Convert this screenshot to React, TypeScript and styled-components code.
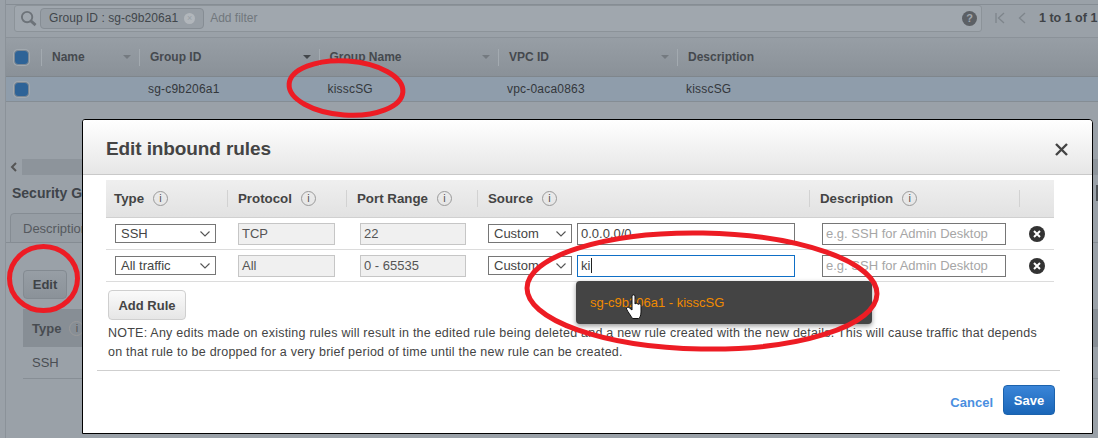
import styled, { createGlobalStyle } from "styled-components";

/* ── Global ─────────────────────────────────────────────── */

const Global = createGlobalStyle`
  html, body {
    margin: 0;
    padding: 0;
    background: #9aa1a8;
  }
  * {
    box-sizing: border-box;
  }
`;

const sans = `"Liberation Sans", Arial, sans-serif`;

/* ── Dimmed page behind the dialog ──────────────────────── */

const Page = styled.div`
  position: relative;
  width: 1098px;
  height: 438px;
  overflow: hidden;
  background: #9aa1a8;
  font-family: ${sans};
  font-size: 12px;
  color: #3d4145;
`;

const Frame = styled.div`
  margin-left: 5px;
  border-left: 1px solid #8b9299;
  height: 100%;
`;

const TopBar = styled.div`
  height: 5px;
  border-top: 3px solid #9aa1a8;
  border-bottom: 1px solid #868d94;
`;

const FilterRow = styled.div`
  display: flex;
  align-items: center;
  height: 33px;
  padding: 0 0 6px 8px;
  border-bottom: 1px solid #8b9299;
  white-space: nowrap;
`;

const FilterBar = styled.div`
  display: flex;
  flex: none;
  align-items: center;
  width: 968px;
  height: 27px;
  padding-left: 5px;
  background: #a0a7ae;
  border: 1px solid #8c9399;
  border-radius: 3px;
`;

const Chip = styled.div`
  display: flex;
  align-items: center;
  gap: 6px;
  height: 21px;
  margin-left: 3px;
  padding: 0 8px 0 8px;
  background: #979ea5;
  border: 1px solid #868d94;
  border-radius: 4px;
  white-space: nowrap;
  letter-spacing: 0.05px;
  color: #41464b;
`;

const ChipClose = styled.span`
  display: flex;
  align-items: center;
  justify-content: center;
  width: 11px;
  height: 11px;
  border-radius: 50%;
  background: #b1b6bb;
  color: #979ea5;
  font-size: 9px;
  line-height: 1;
`;

const FilterHint = styled.span`
  margin-left: 6px;
  color: #71777d;
  flex: 1;
`;

const HelpBadge = styled.span`
  display: flex;
  align-items: center;
  justify-content: center;
  width: 15px;
  height: 15px;
  margin-right: 4px;
  border-radius: 50%;
  background: #5c6065;
  color: #a0a7ae;
  font-size: 11px;
  font-weight: 700;
`;

const Pager = styled.div`
  display: flex;
  flex: none;
  align-items: center;
  gap: 13px;
  margin-left: 13px;
  font-weight: 700;
  font-size: 12.5px;
  white-space: nowrap;
  color: #3f4347;
`;

const GridHead = styled.div`
  display: grid;
  grid-template-columns: 35px 98px 179.5px 179.5px 179px 1fr;
  align-items: center;
  height: 39px;
  background: linear-gradient(#979ea5, #8a9198);
  border-bottom: 1px solid #7f868c;
`;

const HeadCell = styled.div`
  position: relative;
  display: flex;
  align-items: center;
  justify-content: space-between;
  height: 17px;
  padding: 0 8px 0 10px;
  border-left: 1px solid #a3aab0;
  font-weight: 700;
  color: #45494e;
`;

const SortCaret = styled.span<{ $dark?: boolean }>`
  width: 0;
  height: 0;
  border-left: 4px solid transparent;
  border-right: 4px solid transparent;
  border-top: 4px solid ${(p) => (p.$dark ? "#43474b" : "#747a80")};
`;

const CheckCell = styled.div`
  display: flex;
  justify-content: center;
  padding-right: 5px;
`;

const Check = styled.span`
  display: block;
  width: 15px;
  height: 15px;
  background: #2e6397;
  border: 1px solid #7c8894;
  border-radius: 4px;
  box-shadow: 0 0 0 1px #a2a9af;
`;

const GridRow = styled.div`
  display: grid;
  grid-template-columns: 35px 98px 179.5px 179.5px 179px 1fr;
  align-items: center;
  height: 25px;
  background: #8f9dab;
  border-bottom: 1px solid #858d94;
  letter-spacing: 0.2px;
`;

const RowCell = styled.div`
  padding-left: 9px;
  color: #33373b;
`;

const LowerPane = styled.div`
  margin-top: 57px;
  height: 260px;
`;

const ScrollStrip = styled.div`
  display: flex;
  height: 16px;
  background: #8d949b;
`;

const ScrollArrow = styled.div`
  display: flex;
  align-items: center;
  justify-content: center;
  width: 16px;
  background: #9aa1a8;
`;

const PaneTitle = styled.div`
  display: flex;
  align-items: center;
  margin: 10px 0 0 6px;
  font-size: 14px;
  font-weight: 700;
  color: #3f444a;
  line-height: 16px;
  white-space: nowrap;
`;

const PaneScrollStub = styled.span`
  width: 2px;
  height: 16px;
  margin-left: auto;
  background: #4d5257;
`;

const TabStrip = styled.div`
  height: 30px;
  margin-top: 12px;
  padding-left: 4px;
  border-bottom: 1px solid #858c93;
`;

const Tab = styled.div`
  display: flex;
  align-items: center;
  height: 30px;
  width: 120px;
  padding-left: 12px;
  background: #969da4;
  border: 1px solid #858c93;
  border-radius: 4px 4px 0 0;
  font-size: 13px;
  color: #55595e;
`;

const EditButton = styled.div`
  display: flex;
  align-items: center;
  justify-content: center;
  width: 44px;
  height: 29px;
  margin: 27px 0 0 17px;
  background: linear-gradient(#979ea5, #8b9299);
  border: 1px solid #838a91;
  border-radius: 4px;
  font-weight: 700;
  font-size: 13px;
  color: #3f4347;
`;

const PaneHead = styled.div`
  display: flex;
  align-items: center;
  gap: 8px;
  height: 38px;
  margin: 10px 0 0 17px;
  padding-left: 9px;
  background: #878e95;
  font-size: 13px;
  font-weight: 700;
  color: #484c51;
`;

const PaneRow = styled.div`
  display: flex;
  align-items: center;
  height: 32px;
  margin-left: 17px;
  padding-left: 9px;
  border-bottom: 1px solid #878e95;
  font-size: 13px;
  color: #4a4e53;
`;

/* ── Dialog ─────────────────────────────────────────────── */

const Dialog = styled.div`
  position: absolute;
  left: 82px;
  top: 119px;
  width: 1011px;
  height: 315px;
  display: flex;
  flex-direction: column;
  background: #fff;
  border: 1px solid #000;
  border-radius: 3px 4px 0 0;
  overflow: hidden;
`;

const DialogHead = styled.div`
  display: flex;
  align-items: center;
  justify-content: space-between;
  flex: none;
  height: 55px;
  padding: 4px 24px 0 23px;
  background: linear-gradient(#fff, #e6e6e6);
  border-bottom: 1px solid #c9c9c9;
`;

const DialogTitle = styled.h2`
  margin: 0;
  font-size: 19px;
  letter-spacing: -0.1px;
  font-weight: 700;
  color: #444;
`;

const DialogBody = styled.div`
  flex: 1;
  padding: 5px 0 0 14px;
`;

const RulesTable = styled.div`
  width: 948px;
  margin-left: 9px;
`;

const RulesHead = styled.div`
  display: grid;
  grid-template-columns: 121px 119px 131px 332px 210px 35px;
  align-items: center;
  height: 38px;
  background: linear-gradient(#efefef, #e2e2e2);
  border-bottom: 1px solid #d0d0d0;
`;

const RuleHeadCell = styled.div<{ $first?: boolean }>`
  display: flex;
  align-items: center;
  gap: 9px;
  height: 17px;
  padding-left: ${(p) => (p.$first ? "8px" : "10px")};
  border-left: ${(p) => (p.$first ? "none" : "1px solid #d2d2d2")};
  font-size: 13.3px;
  font-weight: 700;
  color: #444;
`;

const InfoIcon = styled.span`
  display: inline-flex;
  align-items: center;
  justify-content: center;
  width: 15px;
  height: 15px;
  border: 1.5px solid #9a9a9a;
  border-radius: 50%;
  font-family: ${sans};
  font-size: 11px;
  font-weight: 400;
  color: #555;
  line-height: 1;
`;

const RuleRow = styled.div`
  display: grid;
  grid-template-columns: 121px 119px 131px 332px 210px 35px;
  align-items: center;
  height: 32px;
  border-bottom: 1px solid #dcdcdc;
`;

const Cell = styled.div<{ $pad?: number }>`
  display: flex;
  align-items: center;
  gap: 5px;
  padding-left: ${(p) => p.$pad ?? 0}px;
`;

const SelectBox = styled.div<{ $width: number }>`
  display: flex;
  align-items: center;
  justify-content: space-between;
  width: ${(p) => p.$width}px;
  height: 19px;
  padding: 0 5px;
  border: 1px solid #767676;
  background: #fff;
  font-size: 13px;
  color: #444;
`;

const ReadonlyBox = styled.div<{ $width: number }>`
  display: flex;
  align-items: center;
  width: ${(p) => p.$width}px;
  height: 22px;
  padding-left: 3px;
  background: #f0f0f0;
  border: 1px solid #c6c6c6;
  font-size: 13px;
  color: #555;
`;

const TextField = styled.div<{ $width: number; $focus?: boolean; $hint?: boolean }>`
  display: flex;
  align-items: center;
  width: ${(p) => p.$width}px;
  height: 22px;
  padding-left: 3px;
  background: #fff;
  border: 1px solid ${(p) => (p.$focus ? "#0f6fc6" : "#767676")};
  font-size: 13px;
  color: ${(p) => (p.$hint ? "#a6a6a6" : "#444")};
  white-space: nowrap;
`;

const Caret = styled.span`
  display: inline-block;
  width: 1px;
  height: 15px;
  margin-left: 1px;
  background: #222;
`;

const RemoveButton = styled.span`
  display: flex;
  align-items: center;
  justify-content: center;
  width: 16px;
  height: 16px;
  margin-left: 10px;
  border-radius: 50%;
  background: #333;
`;

const AddRule = styled.div`
  display: flex;
  align-items: center;
  justify-content: center;
  width: 78px;
  height: 30px;
  margin: 8px 0 0 11px;
  background: linear-gradient(#fafafa, #e6e6e6);
  border: 1px solid #cfcfcf;
  border-radius: 4px;
  font-size: 13px;
  font-weight: 700;
  color: #444;
`;

const Note = styled.p`
  margin: 4px 0 0 11px;
  width: 940px;
  font-size: 12.5px;
  line-height: 19px;
  letter-spacing: 0.23px;
  color: #444;
`;

const FooterRule = styled.div`
  width: 963px;
  margin-top: 8px;
  border-top: 1px solid #cfcfcf;
`;

const Footer = styled.div`
  display: flex;
  align-items: center;
  justify-content: flex-end;
  gap: 10px;
  width: 958px;
  margin-top: 14px;
`;

const CancelLink = styled.a`
  margin-top: 4px;
  font-size: 13px;
  font-weight: 700;
  color: #4a8fe0;
`;

const SaveButton = styled.div`
  display: flex;
  align-items: center;
  justify-content: center;
  width: 52px;
  height: 30px;
  background: linear-gradient(#3a85d8, #1a66b8);
  border: 1px solid #1b62ad;
  border-radius: 4px;
  font-size: 13px;
  font-weight: 700;
  color: #fff;
`;

const Suggest = styled.div`
  position: absolute;
  left: 493px;
  top: 161px;
  display: flex;
  align-items: center;
  width: 296px;
  height: 43px;
  padding-left: 14px;
  background: #444;
  border-radius: 4px;
  box-shadow: 0 2px 5px rgba(0, 0, 0, 0.4);
  font-size: 13px;
  color: #f08a00;
`;

const Annotations = styled.svg`
  position: absolute;
  left: 0;
  top: 0;
  pointer-events: none;
`;

/* ── Icons ──────────────────────────────────────────────── */

function Chevron() {
  return (
    <svg width="10" height="6" viewBox="0 0 10 6" fill="none">
      <path d="M0.5 0.5 L5 5 L9.5 0.5" stroke="#555" strokeWidth="1.1" />
    </svg>
  );
}

function Remove() {
  return (
    <RemoveButton>
      <svg width="8" height="8" viewBox="0 0 8 8">
        <path d="M1 1 L7 7 M7 1 L1 7" stroke="#fff" strokeWidth="2" />
      </svg>
    </RemoveButton>
  );
}

function Info() {
  return <InfoIcon>i</InfoIcon>;
}

const HINT = "e.g. SSH for Admin Desktop";

export default function App() {
  return (
    <Page>
      <Global />
      <Frame>
        <TopBar />
        <FilterRow>
          <FilterBar>
            <svg width="17" height="17" viewBox="0 0 18 18" fill="none">
              <circle cx="7.5" cy="7.5" r="5.5" stroke="#6d7379" strokeWidth="2" />
              <path d="M11.5 11.5 L16.5 16" stroke="#6d7379" strokeWidth="3" />
            </svg>
            <Chip>
              Group ID : sg-c9b206a1
              <ChipClose>×</ChipClose>
            </Chip>
            <FilterHint>Add filter</FilterHint>
            <HelpBadge>?</HelpBadge>
          </FilterBar>
          <Pager>
            <svg width="31" height="12" viewBox="0 0 31 12" fill="none">
              <path d="M1 1 V11 M9 1 L3.500 6 L9 11" stroke="#7e858b" strokeWidth="1.3" />
              <path d="M30 1 L24.500 6 L30 11" stroke="#7e858b" strokeWidth="1.3" />
            </svg>
            1 to 1 of 1
          </Pager>
        </FilterRow>
        <GridHead>
          <CheckCell>
            <Check />
          </CheckCell>
          <HeadCell>
            Name
            <SortCaret />
          </HeadCell>
          <HeadCell>
            Group ID
            <SortCaret $dark />
          </HeadCell>
          <HeadCell>
            Group Name
            <SortCaret />
          </HeadCell>
          <HeadCell>
            VPC ID
            <SortCaret />
          </HeadCell>
          <HeadCell>Description</HeadCell>
        </GridHead>
        <GridRow>
          <CheckCell>
            <Check />
          </CheckCell>
          <RowCell />
          <RowCell>sg-c9b206a1</RowCell>
          <RowCell>kisscSG</RowCell>
          <RowCell>vpc-0aca0863</RowCell>
          <RowCell>kisscSG</RowCell>
        </GridRow>
        <LowerPane>
          <ScrollStrip>
            <ScrollArrow>
              <svg width="8" height="10" viewBox="0 0 8 10" fill="none">
                <path d="M6 1 L2 5 L6 9" stroke="#555" strokeWidth="2" />
              </svg>
            </ScrollArrow>
          </ScrollStrip>
          <PaneTitle>
            Security Group
            <PaneScrollStub />
          </PaneTitle>
          <TabStrip>
            <Tab>Description</Tab>
          </TabStrip>
          <EditButton>Edit</EditButton>
          <PaneHead>
            Type <Info />
          </PaneHead>
          <PaneRow>SSH</PaneRow>
        </LowerPane>
      </Frame>

      <Dialog>
        <DialogHead>
          <DialogTitle>Edit inbound rules</DialogTitle>
          <svg width="13" height="13" viewBox="0 0 13 13">
            <path d="M1 1 L12 12 M12 1 L1 12" stroke="#444" strokeWidth="2.4" />
          </svg>
        </DialogHead>
        <DialogBody>
          <RulesTable>
            <RulesHead>
              <RuleHeadCell $first>
                Type <Info />
              </RuleHeadCell>
              <RuleHeadCell>
                Protocol <Info />
              </RuleHeadCell>
              <RuleHeadCell>
                Port Range <Info />
              </RuleHeadCell>
              <RuleHeadCell>
                Source <Info />
              </RuleHeadCell>
              <RuleHeadCell>
                Description <Info />
              </RuleHeadCell>
              <RuleHeadCell />
            </RulesHead>
            <RuleRow>
              <Cell $pad={9}>
                <SelectBox $width={101}>
                  SSH
                  <Chevron />
                </SelectBox>
              </Cell>
              <Cell $pad={11}>
                <ReadonlyBox $width={97}>TCP</ReadonlyBox>
              </Cell>
              <Cell $pad={14}>
                <ReadonlyBox $width={106}>22</ReadonlyBox>
              </Cell>
              <Cell $pad={11}>
                <SelectBox $width={84}>
                  Custom
                  <Chevron />
                </SelectBox>
                <TextField $width={218}>0.0.0.0/0</TextField>
              </Cell>
              <Cell $pad={13}>
                <TextField $width={184} $hint>
                  {HINT}
                </TextField>
              </Cell>
              <Cell>
                <Remove />
              </Cell>
            </RuleRow>
            <RuleRow>
              <Cell $pad={9}>
                <SelectBox $width={101}>
                  All traffic
                  <Chevron />
                </SelectBox>
              </Cell>
              <Cell $pad={11}>
                <ReadonlyBox $width={97}>All</ReadonlyBox>
              </Cell>
              <Cell $pad={14}>
                <ReadonlyBox $width={106}>0 - 65535</ReadonlyBox>
              </Cell>
              <Cell $pad={11}>
                <SelectBox $width={84}>
                  Custom
                  <Chevron />
                </SelectBox>
                <TextField $width={218} $focus>
                  ki
                  <Caret />
                </TextField>
              </Cell>
              <Cell $pad={13}>
                <TextField $width={184} $hint>
                  {HINT}
                </TextField>
              </Cell>
              <Cell>
                <Remove />
              </Cell>
            </RuleRow>
          </RulesTable>
          <AddRule>Add Rule</AddRule>
          <Note>
            NOTE: Any edits made on existing rules will result in the edited rule being deleted and a new rule created with
            the new details. This will cause traffic that depends on that rule to be dropped for a very brief period of time
            until the new rule can be created.
          </Note>
          <FooterRule />
          <Footer>
            <CancelLink>Cancel</CancelLink>
            <SaveButton>Save</SaveButton>
          </Footer>
        </DialogBody>
        <Suggest>sg-c9b206a1 - kisscSG</Suggest>
      </Dialog>

      <Annotations width="1098" height="438" viewBox="0 0 1098 438" fill="none">
        <ellipse cx="346" cy="88" rx="57" ry="27" stroke="#ed1c24" strokeWidth="5" transform="rotate(4 346 88)" />
        <ellipse cx="43.5" cy="278.5" rx="34" ry="32" stroke="#ed1c24" strokeWidth="5" />
        <ellipse cx="702" cy="291" rx="175" ry="58" stroke="#ed1c24" strokeWidth="5" transform="rotate(1 702 291)" />
        <path
          d="M632 296 C632 294.500 635 294.500 635 296 L635 304 C636 302.800 638 303 638 304.500 C639 303.300 641 303.600 641 305 L641 312 C641 315 640 318 638.500 318.500 L632.500 318.500 C631 316 628 312 626.500 309 C626 307.500 628 306.500 629.500 308 L632 310 Z"
          fill="#fff"
          stroke="#111"
          strokeWidth="1"
        />
      </Annotations>
    </Page>
  );
}
